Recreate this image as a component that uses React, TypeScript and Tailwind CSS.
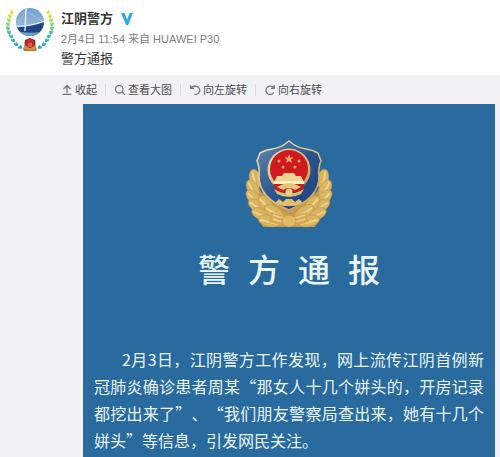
import type { ReactNode } from 'react';

const leaves = [
  { x: 12, y: 12, r: 30, c: '#e3e04a' },
  { x: 10, y: 16, r: 15, c: '#cfdc4e' },
  { x: 9, y: 20, r: 0, c: '#b4d95a' },
  { x: 8, y: 24, r: -5, c: '#8fd07c' },
  { x: 8, y: 28, r: -10, c: '#66c795' },
  { x: 9, y: 32, r: -15, c: '#4cc0a6' },
  { x: 11, y: 36, r: -25, c: '#3db9b0' },
  { x: 13, y: 40, r: -35, c: '#35b2bb' },
  { x: 16, y: 44, r: -45, c: '#30adc2' },
  { x: 20, y: 47, r: -60, c: '#2da9c8' },
];

function WreathSide() {
  return (
    <g>
      {leaves.map((leaf) => (
        <g key={leaf.y} transform={`translate(${leaf.x} ${leaf.y}) rotate(${leaf.r})`} fill={leaf.c}>
          <ellipse cx="-0.6" cy="0" rx="1.2" ry="2.2" transform="rotate(-24)" />
          <ellipse cx="0.9" cy="0.4" rx="1" ry="2" transform="rotate(24)" />
        </g>
      ))}
    </g>
  );
}

function Avatar() {
  return (
    <svg viewBox="0 0 60 56" className="h-14 w-15" role="img" aria-label="江阴警方">
      <defs>
        <clipPath id="avatar-disc">
          <circle cx="30" cy="22" r="14" />
        </clipPath>
        <linearGradient id="avatar-sky" x1="0" y1="0" x2="0" y2="1">
          <stop offset="0" stopColor="#6d9fcd" />
          <stop offset="1" stopColor="#a9c7e1" />
        </linearGradient>
      </defs>
      <WreathSide />
      <g transform="translate(60 0) scale(-1 1)">
        <WreathSide />
      </g>
      <g clipPath="url(#avatar-disc)">
        <rect x="15" y="7" width="30" height="30" fill="url(#avatar-sky)" />
        <path d="M15 27 Q28 28 45 22 V38 H15 Z" fill="#1f4585" />
        <path d="M15 26 Q28 27 45 21" stroke="#eef5fb" strokeWidth="1" fill="none" />
        <path d="M16 31 Q28 34 41 32 L36 38 H20 Z" fill="#6f9bcb" />
        <path d="M26 8 L25 31" stroke="#e8f1f8" strokeWidth="1.4" />
        <path d="M26 11 L43 22 M26 10 L17 26" stroke="#b4d0e8" strokeWidth="0.6" />
      </g>
      <path d="M25 43 Q22 50 25 51 H35 Q38 50 35 43 Z" fill="#c99044" />
      <path d="M23 48 Q30 52 37 48 L36 51 H24 Z" fill="#b7743a" />
      <path d="M30 38 L35 40 Q37 46 30 48 Q23 46 25 40 Z" fill="#5d3a45" />
      <circle cx="30" cy="43" r="4" fill="#d6232b" />
      <path d="M28 44 H32 M28 46 H32" stroke="#efb05c" strokeWidth="0.8" />
    </svg>
  );
}

const feathers = [
  { x: 16, y: 47, r: -12, l: 10 },
  { x: 14, y: 57, r: -28, l: 10 },
  { x: 15, y: 66, r: -44, l: 10 },
  { x: 18, y: 74, r: -56, l: 10 },
  { x: 22, y: 82, r: -66, l: 10 },
  { x: 30, y: 89, r: -76, l: 11 },
  { x: 27, y: 72, r: -42, l: 10 },
  { x: 35, y: 80, r: -56, l: 11 },
];

function BranchSide() {
  return (
    <g>
      <path d="M16 46 L22 60 L50 76 V95 H24 L14 78 L11 58 Z" fill="#c8994a" />
      {feathers.map((f) => (
        <g key={f.y} transform={`translate(${f.x} ${f.y}) rotate(${f.r})`}>
          <ellipse rx="5.6" ry={f.l} fill="#d9b562" stroke="#b98d42" strokeWidth="0.5" />
          <path d={`M-1 ${2 - f.l} V${f.l - 2}`} stroke="#ecd38c" strokeWidth="2" />
        </g>
      ))}
    </g>
  );
}

function PoliceEmblem() {
  return (
    <svg viewBox="0 0 100 100" className="size-[100px]" role="img" aria-label="警徽">
      <defs>
        <linearGradient id="shield" x1="0" y1="0" x2="1" y2="1">
          <stop offset="0" stopColor="#6488b2" />
          <stop offset="0.5" stopColor="#2a558e" />
          <stop offset="1" stopColor="#1b4079" />
        </linearGradient>
        <linearGradient id="gold" x1="0" y1="0" x2="1" y2="1">
          <stop offset="0" stopColor="#efe2b8" />
          <stop offset="1" stopColor="#c69a4c" />
        </linearGradient>
      </defs>
      <BranchSide />
      <g transform="translate(100 0) scale(-1 1)">
        <BranchSide />
      </g>
      <path
        d="M50 9 Q58 16 67 17 Q74 18 79 21 L82 29 Q79 35 80 45 Q80 66 50 78 Q20 66 20 45 Q21 35 18 29 L21 21 Q26 18 33 17 Q42 16 50 9 Z"
        fill="url(#shield)"
        stroke="url(#gold)"
        strokeWidth="1.6"
      />
      <circle cx="50" cy="38" r="21.5" fill="url(#gold)" />
      <circle cx="50" cy="37" r="19" fill="#cf1a22" />
      <g fill="#f2a65a">
        <path d="M50 22 L51.2 25.4 L54.8 25.4 L52 27.6 L53 31 L50 29 L47 31 L48 27.6 L45.2 25.4 L48.8 25.4 Z" />
        <circle cx="40" cy="29" r="1.5" />
        <circle cx="60" cy="29" r="1.5" />
        <circle cx="44" cy="35" r="1.5" />
        <circle cx="56" cy="35" r="1.5" />
      </g>
      <path d="M45 41 H55 L57 44 H62 L65 50 H35 L38 44 H43 Z" fill="#f0d58e" />
      <path d="M35 49 H65 V52 H35 Z" fill="#fbf0c4" />
      <path d="M34 52 H66 L62 60 H38 Z" fill="#c71c20" />
      <path d="M42 53 Q50 49 58 53 L62 55 L56 58 Q50 54 44 58 L38 55 Z" fill="#e9c574" />
      <path d="M35 57 Q50 66 65 57 L62 62 Q50 68 38 62 Z" fill="#e2bf70" />
      <circle cx="50" cy="60" r="3.5" fill="#ecd08a" />
      <path d="M36 71 L40 67 L44 70 L47 67 H53 L56 70 L60 67 L64 71 L56 74 H44 Z" fill="#e2bf70" />
      <path d="M32 80 Q50 88 68 80 L70 90 Q50 97 30 90 Z" fill="#d5a951" />
      <path d="M34 83 Q50 90 66 83 M34 87 Q50 94 66 87" stroke="#ecd38c" strokeWidth="1.4" fill="none" />
      <ellipse cx="50" cy="89" rx="7" ry="6" fill="#dfba67" stroke="#b98d42" strokeWidth="0.6" />
    </svg>
  );
}

function ToolIcon({ children }: { children: ReactNode }) {
  return (
    <svg viewBox="0 0 12 12" className="size-3" fill="none" stroke="#74747c" strokeWidth="1.3" aria-hidden="true">
      {children}
    </svg>
  );
}

const tools = [
  {
    label: '收起',
    icon: <path d="M6 9 V1.5 M2.5 5 L6 1.5 L9.5 5 M1.5 10.4 H10.5" />,
  },
  {
    label: '查看大图',
    icon: (
      <>
        <circle cx="5.2" cy="5.2" r="3.8" />
        <path d="M8 8 L10.8 10.8" />
      </>
    ),
  },
  {
    label: '向左旋转',
    icon: <path d="M1.7 1.2 V4.4 H5 M2 4.2 C3.6 2 6 1.6 8 2.6 A4 4 0 0 1 5.4 10.2" />,
  },
  {
    label: '向右旋转',
    icon: <path d="M10.2 1.2 V4.4 H7 M9.8 4.2 A4.2 4.2 0 1 0 9.8 8.4" />,
  },
];

function Toolbar() {
  return (
    <div className="flex h-[29px] items-center pl-[61px]">
      {tools.map(({ label, icon }, i) => (
        <div key={label} className="flex items-center">
          {i > 0 && <span className="mx-2 h-3 w-px bg-[#dcdce2]" />}
          <button type="button" className="flex items-center gap-0.5 text-[11px] leading-4 text-[#4c4c52]">
            <ToolIcon>{icon}</ToolIcon>
            {label}
          </button>
        </div>
      ))}
    </div>
  );
}

export default function App() {
  return (
    <article
      lang="zh-CN"
      className="min-h-screen bg-[#f2f2f5] font-['Liberation_Sans','Noto_Sans_CJK_SC',sans-serif]"
    >
      <header className="flex h-[75px] bg-white">
        <a href="#profile" className="w-[61px] shrink-0">
          <Avatar />
        </a>
        <div className="pt-[9px]">
          <div className="flex items-center gap-2">
            <a href="#profile" className="text-[13px] leading-5 font-bold text-[#333]">
              江阴警方
            </a>
            <svg viewBox="0 0 12 12" className="size-3" role="img" aria-label="认证">
              <path d="M0 0 H3.6 L6.2 6.5 L8.6 0 H12 L7.2 12 H5 Z" fill="#35a5ea" />
            </svg>
          </div>
          <p className="text-[11px] leading-5 text-[#808080]">2月4日 11:54 来自 HUAWEI P30</p>
          <p className="text-[13px] leading-5 text-[#333]">警方通报</p>
        </div>
      </header>

      <Toolbar />

      <section className="mr-[5px] ml-[83px] bg-[#296a9f] px-[11px] pt-7 pb-1 font-['Noto_Sans_CJK_SC',sans-serif] text-[#eaf5f3]">
        <div className="flex justify-center">
          <PoliceEmblem />
        </div>
        <h1 className="mt-3 flex justify-center gap-[18px] text-[32px] leading-12 font-medium">
          {Array.from('警方通报').map((char) => (
            <span key={char}>{char}</span>
          ))}
        </h1>
        <p className="mt-[54px] indent-7 text-justify text-base leading-[27px] [text-spacing-trim:space-all]">
          2月3日，江阴警方工作发现，网上流传江阴首例新冠肺炎确诊患者周某“那女人十几个姘头的，开房记录都挖出来了”、“我们朋友警察局查出来，她有十几个姘头”等信息，引发网民关注。
        </p>
      </section>
    </article>
  );
}
